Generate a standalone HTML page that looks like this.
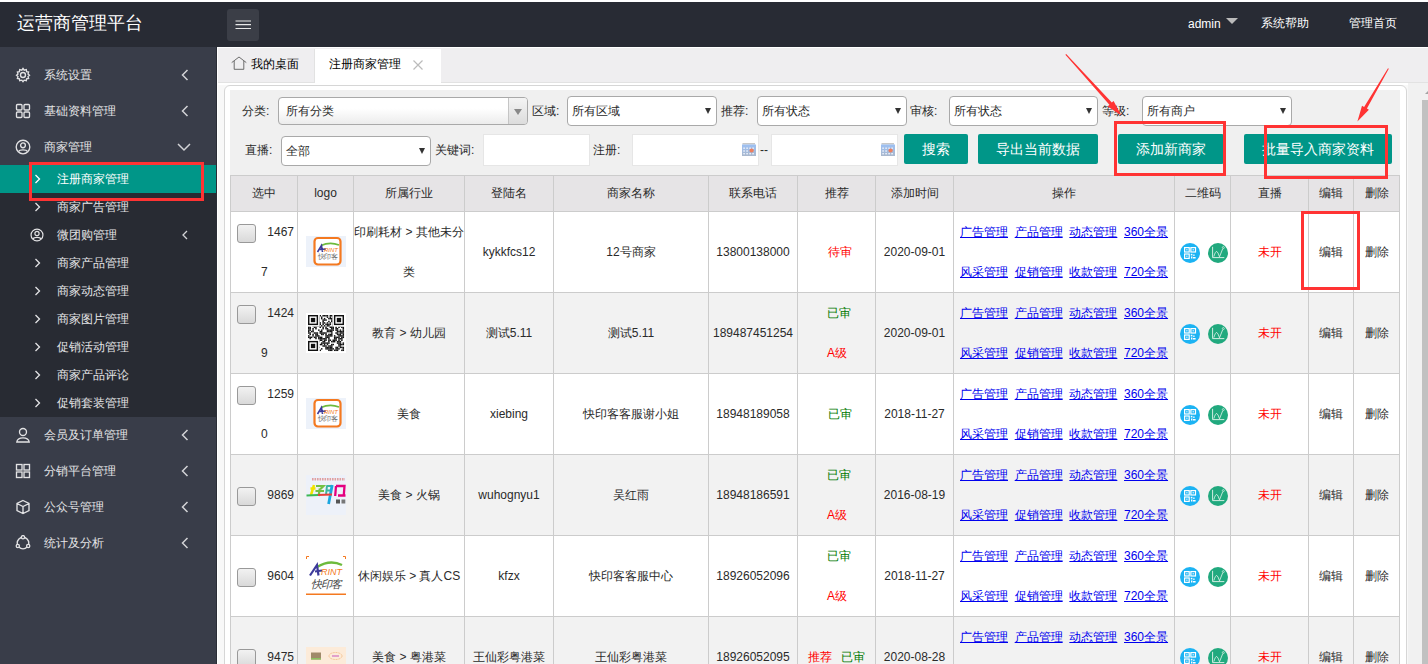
<!DOCTYPE html><html><head><meta charset="utf-8"><title>运营商管理平台</title><style>
*{margin:0;padding:0;box-sizing:border-box}
html,body{width:1428px;height:664px;overflow:hidden;background:#fff;font-family:"Liberation Sans",sans-serif;font-size:12px;color:#2a2a2a}
.abs{position:absolute}
.hdr{position:absolute;left:0;top:2px;width:1428px;height:45px;background:#282b34}
.side{position:absolute;left:0;top:47px;width:217px;height:617px;background:#393d49;border-right:1px solid #2a2d36}
.mi{position:absolute;left:44px;color:#e4e4e6;font-size:12px;line-height:16px;white-space:nowrap}
.sub{position:absolute;left:57px;color:#e4e4e6;font-size:12px;line-height:16px;white-space:nowrap}
.t{position:absolute;white-space:nowrap;line-height:16px}
.sel{position:absolute;background:#fff;border:1px solid #a9a9a9;border-radius:4px}
.sel span{position:absolute;left:6px;top:6px;font-size:12px;line-height:16px;color:#2a2a2a}
.arr{position:absolute;width:0;height:0;border-left:4px solid transparent;border-right:4px solid transparent;border-top:8px solid #333}
.inp{position:absolute;background:#fff;border:1px solid #e6e6e6}
.btn{position:absolute;background:#009688;color:#fff;font-size:14px;border-radius:2px;text-align:center;line-height:30px;height:30px}
.cell{position:absolute;text-align:center;font-size:12px;color:#2a2a2a}
.ln{position:absolute;left:0;width:100%;text-align:center;line-height:16px;white-space:nowrap}
a.lk{color:#0000ee;text-decoration:underline}
.red{color:#f00}.grn{color:#007a00}
.rb{position:absolute;border:3px solid #f33}
</style></head><body>
<div class="hdr"></div>
<div class="t" style="left:17px;top:13px;font-size:18px;line-height:20px;color:#fff">运营商管理平台</div>
<div class="abs" style="left:227px;top:9px;width:32px;height:32px;background:#3b3e47;border-radius:3px"></div>
<svg class="abs" style="left:227px;top:9px" width="32" height="32" viewBox="0 0 32 32"><path d="M8.5 12 H24 M8.5 15.7 H24 M8.5 19.5 H24" stroke="#e8e8e8" stroke-width="1.2"/></svg>
<div class="t" style="left:1188px;top:16px;color:#fff">admin</div>
<div class="arr" style="left:1226px;top:18px;border-left-width:6px;border-right-width:6px;border-top:6px solid #bbb"></div>
<div class="t" style="left:1261px;top:15px;color:#fff">系统帮助</div>
<div class="t" style="left:1349px;top:15px;color:#fff">管理首页</div>
<div class="side"></div>
<div class="abs" style="left:0;top:165px;width:216px;height:252px;background:#282b33"></div>
<div class="abs" style="left:0;top:165px;width:216px;height:28px;background:#009688"></div>
<svg class="abs" style="left:15px;top:67px" width="16" height="16" viewBox="0 0 16 16"><circle cx="8" cy="8" r="2.5" stroke="#e2e2e4" fill="none" stroke-width="1.35"/><path d="M8 1.5 L9.2 3.2 L11.3 2.6 L11.6 4.6 L13.6 5 L13 7 L14.5 8.3 L13 9.6 L13.6 11.4 L11.6 11.8 L11.3 13.6 L9.2 13.2 L8 14.7 L6.8 13.2 L4.7 13.6 L4.4 11.8 L2.4 11.4 L3 9.6 L1.5 8.3 L3 7 L2.4 5 L4.4 4.6 L4.7 2.6 L6.8 3.2 Z" stroke="#e2e2e4" fill="none" stroke-width="1.35"/></svg>
<div class="mi" style="top:67px">系统设置</div>
<svg class="abs" style="left:180px;top:69px" width="10" height="12" viewBox="0 0 10 12"><path d="M7.5 1 L2.5 6 L7.5 11" stroke="#d2d3d6" fill="none" stroke-width="1.5"/></svg>
<svg class="abs" style="left:15px;top:103px" width="16" height="16" viewBox="0 0 16 16"><rect x="1.5" y="1.5" width="5.5" height="5.5" rx="1" stroke="#e2e2e4" fill="none" stroke-width="1.35"/><rect x="9" y="1.5" width="5.5" height="5.5" rx="1" stroke="#e2e2e4" fill="none" stroke-width="1.35"/><rect x="1.5" y="9" width="5.5" height="5.5" rx="1" stroke="#e2e2e4" fill="none" stroke-width="1.35"/><rect x="9" y="9" width="5.5" height="5.5" rx="1" stroke="#e2e2e4" fill="none" stroke-width="1.35"/></svg>
<div class="mi" style="top:103px">基础资料管理</div>
<svg class="abs" style="left:180px;top:105px" width="10" height="12" viewBox="0 0 10 12"><path d="M7.5 1 L2.5 6 L7.5 11" stroke="#d2d3d6" fill="none" stroke-width="1.5"/></svg>
<svg class="abs" style="left:15px;top:139px" width="16" height="16" viewBox="0 0 16 16"><circle cx="8" cy="8" r="6.8" stroke="#e2e2e4" fill="none" stroke-width="1.35"/><circle cx="8" cy="6.3" r="2.4" stroke="#e2e2e4" fill="none" stroke-width="1.35"/><path d="M3.6 12.6 C4.5 10.2 11.5 10.2 12.4 12.6" stroke="#e2e2e4" fill="none" stroke-width="1.35"/></svg>
<div class="mi" style="top:139px">商家管理</div>
<svg class="abs" style="left:177px;top:142px" width="14" height="10" viewBox="0 0 14 10"><path d="M1 2 L7 8 L13 2" stroke="#d2d3d6" fill="none" stroke-width="1.5"/></svg>
<svg class="abs" style="left:34px;top:173px" width="8" height="12" viewBox="0 0 8 12"><path d="M1.5 2 L5.5 6 L1.5 10" stroke="#fff" fill="none" stroke-width="1.3"/></svg>
<div class="sub" style="top:171px;color:#fff">注册商家管理</div>
<svg class="abs" style="left:34px;top:201px" width="8" height="12" viewBox="0 0 8 12"><path d="M1.5 2 L5.5 6 L1.5 10" stroke="#e4e4e6" fill="none" stroke-width="1.3"/></svg>
<div class="sub" style="top:199px;color:#e4e4e6">商家广告管理</div>
<svg class="abs" style="left:30px;top:228px" width="14" height="14" viewBox="0 0 16 16"><circle cx="8" cy="8" r="6.8" stroke="#e2e2e4" fill="none" stroke-width="1.35"/><circle cx="8" cy="6.3" r="2.4" stroke="#e2e2e4" fill="none" stroke-width="1.35"/><path d="M3.6 12.6 C4.5 10.2 11.5 10.2 12.4 12.6" stroke="#e2e2e4" fill="none" stroke-width="1.35"/></svg>
<div class="sub" style="top:227px;color:#e4e4e6">微团购管理</div>
<svg class="abs" style="left:181px;top:229px" width="8" height="12" viewBox="0 0 8 12"><path d="M6 2 L2 6 L6 10" stroke="#d2d3d6" fill="none" stroke-width="1.3"/></svg>
<svg class="abs" style="left:34px;top:257px" width="8" height="12" viewBox="0 0 8 12"><path d="M1.5 2 L5.5 6 L1.5 10" stroke="#e4e4e6" fill="none" stroke-width="1.3"/></svg>
<div class="sub" style="top:255px;color:#e4e4e6">商家产品管理</div>
<svg class="abs" style="left:34px;top:285px" width="8" height="12" viewBox="0 0 8 12"><path d="M1.5 2 L5.5 6 L1.5 10" stroke="#e4e4e6" fill="none" stroke-width="1.3"/></svg>
<div class="sub" style="top:283px;color:#e4e4e6">商家动态管理</div>
<svg class="abs" style="left:34px;top:313px" width="8" height="12" viewBox="0 0 8 12"><path d="M1.5 2 L5.5 6 L1.5 10" stroke="#e4e4e6" fill="none" stroke-width="1.3"/></svg>
<div class="sub" style="top:311px;color:#e4e4e6">商家图片管理</div>
<svg class="abs" style="left:34px;top:341px" width="8" height="12" viewBox="0 0 8 12"><path d="M1.5 2 L5.5 6 L1.5 10" stroke="#e4e4e6" fill="none" stroke-width="1.3"/></svg>
<div class="sub" style="top:339px;color:#e4e4e6">促销活动管理</div>
<svg class="abs" style="left:34px;top:369px" width="8" height="12" viewBox="0 0 8 12"><path d="M1.5 2 L5.5 6 L1.5 10" stroke="#e4e4e6" fill="none" stroke-width="1.3"/></svg>
<div class="sub" style="top:367px;color:#e4e4e6">商家产品评论</div>
<svg class="abs" style="left:34px;top:397px" width="8" height="12" viewBox="0 0 8 12"><path d="M1.5 2 L5.5 6 L1.5 10" stroke="#e4e4e6" fill="none" stroke-width="1.3"/></svg>
<div class="sub" style="top:395px;color:#e4e4e6">促销套装管理</div>
<svg class="abs" style="left:15px;top:427px" width="16" height="16" viewBox="0 0 16 16"><circle cx="8" cy="5" r="3.5" stroke="#e2e2e4" fill="none" stroke-width="1.35"/><path d="M1.8 15 C2.5 9.5 13.5 9.5 14.2 15 Z" stroke="#e2e2e4" fill="none" stroke-width="1.35"/></svg>
<div class="mi" style="top:427px">会员及订单管理</div>
<svg class="abs" style="left:180px;top:429px" width="10" height="12" viewBox="0 0 10 12"><path d="M7.5 1 L2.5 6 L7.5 11" stroke="#d2d3d6" fill="none" stroke-width="1.5"/></svg>
<svg class="abs" style="left:15px;top:463px" width="16" height="16" viewBox="0 0 16 16"><rect x="1.5" y="1.5" width="5.5" height="5.5" stroke="#e2e2e4" fill="none" stroke-width="1.35"/><rect x="9" y="1.5" width="5.5" height="5.5" stroke="#e2e2e4" fill="none" stroke-width="1.35"/><rect x="1.5" y="9" width="5.5" height="5.5" stroke="#e2e2e4" fill="none" stroke-width="1.35"/><rect x="9" y="9" width="5.5" height="5.5" stroke="#e2e2e4" fill="none" stroke-width="1.35"/></svg>
<div class="mi" style="top:463px">分销平台管理</div>
<svg class="abs" style="left:180px;top:465px" width="10" height="12" viewBox="0 0 10 12"><path d="M7.5 1 L2.5 6 L7.5 11" stroke="#d2d3d6" fill="none" stroke-width="1.5"/></svg>
<svg class="abs" style="left:15px;top:499px" width="16" height="16" viewBox="0 0 16 16"><path d="M8 1.5 L14 4.5 L14 11.5 L8 14.5 L2 11.5 L2 4.5 Z M2 4.5 L8 7.5 L14 4.5 M8 7.5 L8 14.5" stroke="#e2e2e4" fill="none" stroke-width="1.35"/></svg>
<div class="mi" style="top:499px">公众号管理</div>
<svg class="abs" style="left:180px;top:501px" width="10" height="12" viewBox="0 0 10 12"><path d="M7.5 1 L2.5 6 L7.5 11" stroke="#d2d3d6" fill="none" stroke-width="1.5"/></svg>
<svg class="abs" style="left:15px;top:535px" width="16" height="16" viewBox="0 0 16 16"><circle cx="8" cy="8" r="5.8" stroke="#e2e2e4" fill="none" stroke-width="1.35"/><circle cx="8" cy="2.2" r="1.6" fill="#393d49" stroke="#e2e2e4" fill="none" stroke-width="1.35"/><circle cx="2.8" cy="11" r="1.6" fill="#393d49" stroke="#e2e2e4" fill="none" stroke-width="1.35"/><circle cx="13.2" cy="11" r="1.6" fill="#393d49" stroke="#e2e2e4" fill="none" stroke-width="1.35"/></svg>
<div class="mi" style="top:535px">统计及分析</div>
<svg class="abs" style="left:180px;top:537px" width="10" height="12" viewBox="0 0 10 12"><path d="M7.5 1 L2.5 6 L7.5 11" stroke="#d2d3d6" fill="none" stroke-width="1.5"/></svg>
<div class="rb" style="left:29px;top:162px;width:175px;height:39px"></div>
<div class="abs" style="left:217px;top:47px;width:1211px;height:36px;background:#efeef0;border-top:1px solid #fff;border-bottom:1px solid #e2e2e2"></div>
<div class="abs" style="left:217px;top:47px;width:1px;height:617px;background:#fff"></div>
<svg class="abs" style="left:231px;top:56px" width="16" height="15" viewBox="0 0 16 15"><path d="M0.7 6.6 L8 1 L15.3 6.6 M3.2 5 V13.3 H12.8 V5" stroke="#555" fill="none" stroke-width="0.85"/></svg>
<div class="t" style="left:251px;top:56px;color:#000">我的桌面</div>
<div class="abs" style="left:314px;top:49px;width:127px;height:34px;background:#fff;border-left:1px solid #e2e2e2"></div>
<div class="t" style="left:329px;top:56px;color:#000">注册商家管理</div>
<svg class="abs" style="left:413px;top:60px" width="10" height="10" viewBox="0 0 10 10"><path d="M0.5 0.5 L9.5 9.5 M9.5 0.5 L0.5 9.5" stroke="#bbb" fill="none" stroke-width="1.2"/></svg>
<div class="abs" style="left:218px;top:83px;width:1190px;height:581px;background:#f8f8f8"></div><div class="abs" style="left:218px;top:83px;width:1190px;height:2px;background:#fff"></div>
<div class="abs" style="left:1408px;top:83px;width:20px;height:581px;background:#f1f1f1"></div>
<div class="abs" style="left:1422px;top:100px;width:6px;height:564px;background:#c1c1c1"></div>
<div class="abs" style="left:1425px;top:90px;width:0;height:0;border-left:4px solid transparent;border-right:4px solid transparent;border-bottom:4px solid #a3a3a3"></div>
<div class="abs" style="left:224px;top:85px;width:1183px;height:600px;border:1px solid #d6d6d6;border-radius:6px;background:#fff"></div>
<div class="abs" style="left:230px;top:90px;width:1170px;height:600px;background:#f0f0f0"></div>
<div class="t" style="left:242px;top:103px">分类:</div>
<div class="sel" style="left:278px;top:97px;width:250px;height:28px;background:linear-gradient(#fff 40%,#ececec)"><span style="left:7px;top:5px">所有分类</span></div>
<div class="abs" style="left:508px;top:98px;width:19px;height:26px;border-left:1px solid #c5c5c5;background:linear-gradient(#f4f4f4,#dcdcdc);border-radius:0 3px 3px 0"></div>
<div class="arr" style="left:514px;top:109px;border-left-width:4px;border-right-width:4px;border-top:6px solid #888"></div>
<div class="t" style="left:532px;top:103px">区域:</div>
<div class="sel" style="left:567px;top:96px;width:150px;height:30px;"><span style="left:4px;top:6px">所有区域</span></div>
<div class="arr" style="left:705px;top:108px;border-left-width:3px;border-right-width:3px;border-top:6px solid #333"></div>
<div class="t" style="left:721px;top:103px">推荐:</div>
<div class="sel" style="left:757px;top:96px;width:150px;height:30px;"><span style="left:4px;top:6px">所有状态</span></div>
<div class="arr" style="left:895px;top:108px;border-left-width:3px;border-right-width:3px;border-top:6px solid #333"></div>
<div class="t" style="left:910px;top:103px">审核:</div>
<div class="sel" style="left:949px;top:96px;width:149px;height:30px;"><span style="left:4px;top:6px">所有状态</span></div>
<div class="arr" style="left:1086px;top:108px;border-left-width:3px;border-right-width:3px;border-top:6px solid #333"></div>
<div class="t" style="left:1102px;top:103px">等级:</div>
<div class="sel" style="left:1142px;top:96px;width:150px;height:30px;"><span style="left:4px;top:6px">所有商户</span></div>
<div class="arr" style="left:1280px;top:108px;border-left-width:3px;border-right-width:3px;border-top:6px solid #333"></div>
<div class="t" style="left:245px;top:142px">直播:</div>
<div class="sel" style="left:281px;top:136px;width:150px;height:30px;"><span style="left:4px;top:6px">全部</span></div>
<div class="arr" style="left:419px;top:148px;border-left-width:3px;border-right-width:3px;border-top:6px solid #333"></div>
<div class="t" style="left:435px;top:142px">关键词:</div>
<div class="inp" style="left:483px;top:134px;width:107px;height:32px"></div>
<div class="t" style="left:593px;top:142px">注册:</div>
<div class="inp" style="left:632px;top:134px;width:127px;height:32px"></div>
<svg class="abs" style="left:742px;top:143px" width="14" height="13" viewBox="0 0 14 13"><defs><linearGradient id="cg" x1="0" y1="0" x2="0" y2="1"><stop offset="0" stop-color="#9cc0f4"/><stop offset="1" stop-color="#aab8cc"/></linearGradient></defs><rect x="0.5" y="0" width="12.5" height="1.6" fill="#c8c8c8"/><rect x="0" y="1.5" width="14" height="11.5" fill="url(#cg)"/><g fill="#f4f8ff" opacity="0.9"><rect x="1.3" y="4.5" width="1.6" height="1.4"/><rect x="4.3" y="4.5" width="1.6" height="1.4"/><rect x="7.3" y="4.5" width="1.6" height="1.4"/><rect x="10.3" y="4.5" width="1.6" height="1.4"/><rect x="1.3" y="7.3" width="1.6" height="1.4"/><rect x="4.3" y="7.3" width="1.6" height="1.4"/><rect x="1.3" y="10" width="1.6" height="1.4"/><rect x="4.3" y="10" width="1.6" height="1.4"/><rect x="7.3" y="10" width="1.6" height="1.4"/><rect x="10.3" y="10" width="1.6" height="1.4"/></g><circle cx="9.6" cy="7.5" r="2.1" fill="#ee7f5e"/></svg>
<div class="t" style="left:760px;top:142px">--</div>
<div class="inp" style="left:771px;top:134px;width:127px;height:32px"></div>
<svg class="abs" style="left:881px;top:143px" width="14" height="13" viewBox="0 0 14 13"><defs><linearGradient id="cg" x1="0" y1="0" x2="0" y2="1"><stop offset="0" stop-color="#9cc0f4"/><stop offset="1" stop-color="#aab8cc"/></linearGradient></defs><rect x="0.5" y="0" width="12.5" height="1.6" fill="#c8c8c8"/><rect x="0" y="1.5" width="14" height="11.5" fill="url(#cg)"/><g fill="#f4f8ff" opacity="0.9"><rect x="1.3" y="4.5" width="1.6" height="1.4"/><rect x="4.3" y="4.5" width="1.6" height="1.4"/><rect x="7.3" y="4.5" width="1.6" height="1.4"/><rect x="10.3" y="4.5" width="1.6" height="1.4"/><rect x="1.3" y="7.3" width="1.6" height="1.4"/><rect x="4.3" y="7.3" width="1.6" height="1.4"/><rect x="1.3" y="10" width="1.6" height="1.4"/><rect x="4.3" y="10" width="1.6" height="1.4"/><rect x="7.3" y="10" width="1.6" height="1.4"/><rect x="10.3" y="10" width="1.6" height="1.4"/></g><circle cx="9.6" cy="7.5" r="2.1" fill="#ee7f5e"/></svg>
<div class="btn" style="left:904px;top:134px;width:64px">搜索</div>
<div class="btn" style="left:978px;top:134px;width:120px">导出当前数据</div>
<div class="btn" style="left:1118px;top:134px;width:106px">添加新商家</div>
<div class="btn" style="left:1244px;top:134px;width:148px">批量导入商家资料</div>
<div class="abs" style="left:230px;top:175px;width:1170px;height:36px;background:#e6e4e6"></div>
<div class="abs" style="left:230px;top:211px;width:1170px;height:81px;background:#fff"></div>
<div class="abs" style="left:230px;top:292px;width:1170px;height:81px;background:#f2f2f2"></div>
<div class="abs" style="left:230px;top:373px;width:1170px;height:81px;background:#fff"></div>
<div class="abs" style="left:230px;top:454px;width:1170px;height:81px;background:#f2f2f2"></div>
<div class="abs" style="left:230px;top:535px;width:1170px;height:81px;background:#fff"></div>
<div class="abs" style="left:230px;top:616px;width:1170px;height:81px;background:#f2f2f2"></div>
<div class="abs" style="left:230px;top:175px;width:1px;height:489px;background:#ccc"></div>
<div class="abs" style="left:297px;top:175px;width:1px;height:489px;background:#ccc"></div>
<div class="abs" style="left:353px;top:175px;width:1px;height:489px;background:#ccc"></div>
<div class="abs" style="left:464px;top:175px;width:1px;height:489px;background:#ccc"></div>
<div class="abs" style="left:553px;top:175px;width:1px;height:489px;background:#ccc"></div>
<div class="abs" style="left:708px;top:175px;width:1px;height:489px;background:#ccc"></div>
<div class="abs" style="left:797px;top:175px;width:1px;height:489px;background:#ccc"></div>
<div class="abs" style="left:875px;top:175px;width:1px;height:489px;background:#ccc"></div>
<div class="abs" style="left:953px;top:175px;width:1px;height:489px;background:#ccc"></div>
<div class="abs" style="left:1174px;top:175px;width:1px;height:489px;background:#ccc"></div>
<div class="abs" style="left:1230px;top:175px;width:1px;height:489px;background:#ccc"></div>
<div class="abs" style="left:1308px;top:175px;width:1px;height:489px;background:#ccc"></div>
<div class="abs" style="left:1353px;top:175px;width:1px;height:489px;background:#ccc"></div>
<div class="abs" style="left:1399px;top:175px;width:1px;height:489px;background:#ccc"></div>
<div class="abs" style="left:230px;top:175px;width:1170px;height:1px;background:#ccc"></div>
<div class="abs" style="left:230px;top:211px;width:1170px;height:1px;background:#ccc"></div>
<div class="abs" style="left:230px;top:292px;width:1170px;height:1px;background:#ccc"></div>
<div class="abs" style="left:230px;top:373px;width:1170px;height:1px;background:#ccc"></div>
<div class="abs" style="left:230px;top:454px;width:1170px;height:1px;background:#ccc"></div>
<div class="abs" style="left:230px;top:535px;width:1170px;height:1px;background:#ccc"></div>
<div class="abs" style="left:230px;top:616px;width:1170px;height:1px;background:#ccc"></div>
<div class="cell" style="left:230px;width:68px;top:185px;line-height:16px">选中</div>
<div class="cell" style="left:297px;width:57px;top:185px;line-height:16px">logo</div>
<div class="cell" style="left:353px;width:112px;top:185px;line-height:16px">所属行业</div>
<div class="cell" style="left:464px;width:90px;top:185px;line-height:16px">登陆名</div>
<div class="cell" style="left:553px;width:156px;top:185px;line-height:16px">商家名称</div>
<div class="cell" style="left:708px;width:90px;top:185px;line-height:16px">联系电话</div>
<div class="cell" style="left:797px;width:79px;top:185px;line-height:16px">推荐</div>
<div class="cell" style="left:875px;width:79px;top:185px;line-height:16px">添加时间</div>
<div class="cell" style="left:953px;width:222px;top:185px;line-height:16px">操作</div>
<div class="cell" style="left:1174px;width:57px;top:185px;line-height:16px">二维码</div>
<div class="cell" style="left:1230px;width:79px;top:185px;line-height:16px">直播</div>
<div class="cell" style="left:1308px;width:46px;top:185px;line-height:16px">编辑</div>
<div class="cell" style="left:1353px;width:47px;top:185px;line-height:16px">删除</div>
<div class="cell " style="left:230px;width:68px;top:224px;line-height:16px;text-align:right;white-space:nowrap;padding-right:4px">1467</div>
<div class="cell " style="left:230px;width:68px;top:264px;line-height:16px;text-align:left;white-space:nowrap;padding-left:31px">7</div>
<div class="abs" style="left:237px;top:224px;width:19px;height:19px;border:1px solid #999;border-radius:3px;background:linear-gradient(#f2f2f2,#d9d9d9)"></div>
<svg class="abs" style="left:306px;top:236px" width="40" height="31" viewBox="0 0 40 31"><rect width="40" height="31" fill="#edf2fa"/><rect x="8.5" y="2" width="26" height="26.5" rx="3.5" fill="#fff" stroke="#f47920" stroke-width="2.2"/><path d="M15 9.5 Q24 5.5 33 9" stroke="#6dbb3c" stroke-width="1.6" fill="none"/><path d="M11.5 16 L15.5 9.5 L16.5 16 M14 13.5 L20 13" stroke="#3d3a9a" stroke-width="1.6" fill="none"/><text x="18" y="15.5" font-size="6" fill="#f47920" font-family="Liberation Sans" font-style="italic">RINT</text><text x="11.5" y="23" font-size="7" fill="#6a6a6a" font-family="Liberation Sans" letter-spacing="-0.5">快印客</text></svg>
<div class="cell " style="left:353px;width:112px;top:224px;line-height:16px;text-align:center;white-space:nowrap;">印刷耗材 > 其他未分</div>
<div class="cell " style="left:353px;width:112px;top:264px;line-height:16px;text-align:center;white-space:nowrap;">类</div>
<div class="cell " style="left:464px;width:90px;top:244px;line-height:16px;text-align:center;white-space:nowrap;">kykkfcs12</div>
<div class="cell " style="left:553px;width:156px;top:244px;line-height:16px;text-align:center;white-space:nowrap;">12号商家</div>
<div class="cell " style="left:708px;width:90px;top:244px;line-height:16px;text-align:center;white-space:nowrap;">13800138000</div>
<div class="cell red" style="left:797px;width:79px;top:244px;line-height:16px;text-align:left;white-space:nowrap;padding-left:31px">待审</div>
<div class="cell " style="left:875px;width:79px;top:244px;line-height:16px;text-align:center;white-space:nowrap;">2020-09-01</div>
<div class="cell" style="left:960px;top:224px;line-height:16px;white-space:nowrap;text-align:left"><a class="lk">广告管理</a> &nbsp;<a class="lk">产品管理</a> &nbsp;<a class="lk">动态管理</a> &nbsp;<a class="lk">360全景</a></div>
<div class="cell" style="left:960px;top:264px;line-height:16px;white-space:nowrap;text-align:left"><a class="lk">风采管理</a> &nbsp;<a class="lk">促销管理</a> &nbsp;<a class="lk">收款管理</a> &nbsp;<a class="lk">720全景</a></div>
<svg class="abs" style="left:1180px;top:243px" width="20" height="20" viewBox="0 0 20 20"><circle cx="10" cy="10" r="10" fill="#1cb3f3"/><g fill="none" stroke="#fff" stroke-width="1.2"><rect x="4.6" y="4.6" width="4.6" height="4.4"/><rect x="10.9" y="4.6" width="4.6" height="4.4"/><rect x="4.6" y="11" width="4.6" height="4.4"/></g><g fill="#fff"><rect x="6.3" y="6.2" width="1.2" height="1.2"/><rect x="12.6" y="6.2" width="1.2" height="1.2"/><rect x="6.3" y="12.6" width="1.2" height="1.2"/><rect x="10.8" y="10.8" width="1.6" height="1.6"/><rect x="13.2" y="11.5" width="1.4" height="1.4"/><rect x="11" y="13.5" width="1.4" height="2"/><rect x="13" y="14" width="2.6" height="1.5"/></g></svg>
<svg class="abs" style="left:1208px;top:243px" width="20" height="20" viewBox="0 0 20 20"><circle cx="10" cy="10" r="10" fill="#21a97e"/><path d="M4.6 3.8 V14.6 H16.3" stroke="#e6f5ee" stroke-width="0.9" fill="none"/><path d="M5.8 13.6 Q7.5 8 8.8 8.5 Q10 9 11.5 13.8 L14.6 6" stroke="#e6f5ee" stroke-width="0.8" fill="none"/><circle cx="15.3" cy="4.6" r="1" stroke="#e6f5ee" stroke-width="0.7" fill="none"/></svg>
<div class="cell red" style="left:1230px;width:79px;top:244px;line-height:16px;text-align:center;white-space:nowrap;">未开</div>
<div class="cell " style="left:1308px;width:46px;top:244px;line-height:16px;text-align:center;white-space:nowrap;">编辑</div>
<div class="cell " style="left:1353px;width:47px;top:244px;line-height:16px;text-align:center;white-space:nowrap;">删除</div>
<div class="cell " style="left:230px;width:68px;top:305px;line-height:16px;text-align:right;white-space:nowrap;padding-right:4px">1424</div>
<div class="cell " style="left:230px;width:68px;top:345px;line-height:16px;text-align:left;white-space:nowrap;padding-left:31px">9</div>
<div class="abs" style="left:237px;top:305px;width:19px;height:19px;border:1px solid #999;border-radius:3px;background:linear-gradient(#f2f2f2,#d9d9d9)"></div>
<svg class="abs" style="left:306px;top:313px" width="40" height="40" viewBox="0 0 40 40"><rect width="40" height="40" fill="#fff"/><rect x="2.00" y="2.00" width="1.49" height="1.49" fill="#111"/><rect x="2.00" y="3.44" width="1.49" height="1.49" fill="#111"/><rect x="2.00" y="6.32" width="1.49" height="1.49" fill="#111"/><rect x="2.00" y="9.20" width="1.49" height="1.49" fill="#111"/><rect x="2.00" y="10.64" width="1.49" height="1.49" fill="#111"/><rect x="2.00" y="12.08" width="1.49" height="1.49" fill="#111"/><rect x="2.00" y="13.52" width="1.49" height="1.49" fill="#111"/><rect x="2.00" y="14.96" width="1.49" height="1.49" fill="#111"/><rect x="2.00" y="16.40" width="1.49" height="1.49" fill="#111"/><rect x="2.00" y="17.84" width="1.49" height="1.49" fill="#111"/><rect x="2.00" y="19.28" width="1.49" height="1.49" fill="#111"/><rect x="2.00" y="22.16" width="1.49" height="1.49" fill="#111"/><rect x="2.00" y="23.60" width="1.49" height="1.49" fill="#111"/><rect x="2.00" y="29.36" width="1.49" height="1.49" fill="#111"/><rect x="2.00" y="32.24" width="1.49" height="1.49" fill="#111"/><rect x="2.00" y="35.12" width="1.49" height="1.49" fill="#111"/><rect x="2.00" y="36.56" width="1.49" height="1.49" fill="#111"/><rect x="3.44" y="2.00" width="1.49" height="1.49" fill="#111"/><rect x="3.44" y="3.44" width="1.49" height="1.49" fill="#111"/><rect x="3.44" y="6.32" width="1.49" height="1.49" fill="#111"/><rect x="3.44" y="10.64" width="1.49" height="1.49" fill="#111"/><rect x="3.44" y="13.52" width="1.49" height="1.49" fill="#111"/><rect x="3.44" y="14.96" width="1.49" height="1.49" fill="#111"/><rect x="3.44" y="16.40" width="1.49" height="1.49" fill="#111"/><rect x="3.44" y="19.28" width="1.49" height="1.49" fill="#111"/><rect x="3.44" y="20.72" width="1.49" height="1.49" fill="#111"/><rect x="3.44" y="23.60" width="1.49" height="1.49" fill="#111"/><rect x="3.44" y="25.04" width="1.49" height="1.49" fill="#111"/><rect x="3.44" y="29.36" width="1.49" height="1.49" fill="#111"/><rect x="3.44" y="36.56" width="1.49" height="1.49" fill="#111"/><rect x="4.88" y="3.44" width="1.49" height="1.49" fill="#111"/><rect x="4.88" y="4.88" width="1.49" height="1.49" fill="#111"/><rect x="4.88" y="7.76" width="1.49" height="1.49" fill="#111"/><rect x="4.88" y="9.20" width="1.49" height="1.49" fill="#111"/><rect x="4.88" y="10.64" width="1.49" height="1.49" fill="#111"/><rect x="4.88" y="17.84" width="1.49" height="1.49" fill="#111"/><rect x="4.88" y="23.60" width="1.49" height="1.49" fill="#111"/><rect x="4.88" y="27.92" width="1.49" height="1.49" fill="#111"/><rect x="4.88" y="30.80" width="1.49" height="1.49" fill="#111"/><rect x="6.32" y="2.00" width="1.49" height="1.49" fill="#111"/><rect x="6.32" y="3.44" width="1.49" height="1.49" fill="#111"/><rect x="6.32" y="6.32" width="1.49" height="1.49" fill="#111"/><rect x="6.32" y="7.76" width="1.49" height="1.49" fill="#111"/><rect x="6.32" y="9.20" width="1.49" height="1.49" fill="#111"/><rect x="6.32" y="10.64" width="1.49" height="1.49" fill="#111"/><rect x="6.32" y="12.08" width="1.49" height="1.49" fill="#111"/><rect x="6.32" y="14.96" width="1.49" height="1.49" fill="#111"/><rect x="6.32" y="16.40" width="1.49" height="1.49" fill="#111"/><rect x="6.32" y="17.84" width="1.49" height="1.49" fill="#111"/><rect x="6.32" y="20.72" width="1.49" height="1.49" fill="#111"/><rect x="6.32" y="22.16" width="1.49" height="1.49" fill="#111"/><rect x="6.32" y="29.36" width="1.49" height="1.49" fill="#111"/><rect x="6.32" y="30.80" width="1.49" height="1.49" fill="#111"/><rect x="6.32" y="32.24" width="1.49" height="1.49" fill="#111"/><rect x="6.32" y="36.56" width="1.49" height="1.49" fill="#111"/><rect x="7.76" y="2.00" width="1.49" height="1.49" fill="#111"/><rect x="7.76" y="3.44" width="1.49" height="1.49" fill="#111"/><rect x="7.76" y="4.88" width="1.49" height="1.49" fill="#111"/><rect x="7.76" y="6.32" width="1.49" height="1.49" fill="#111"/><rect x="7.76" y="9.20" width="1.49" height="1.49" fill="#111"/><rect x="7.76" y="10.64" width="1.49" height="1.49" fill="#111"/><rect x="7.76" y="12.08" width="1.49" height="1.49" fill="#111"/><rect x="7.76" y="13.52" width="1.49" height="1.49" fill="#111"/><rect x="7.76" y="19.28" width="1.49" height="1.49" fill="#111"/><rect x="7.76" y="23.60" width="1.49" height="1.49" fill="#111"/><rect x="7.76" y="30.80" width="1.49" height="1.49" fill="#111"/><rect x="7.76" y="32.24" width="1.49" height="1.49" fill="#111"/><rect x="7.76" y="33.68" width="1.49" height="1.49" fill="#111"/><rect x="7.76" y="36.56" width="1.49" height="1.49" fill="#111"/><rect x="9.20" y="2.00" width="1.49" height="1.49" fill="#111"/><rect x="9.20" y="3.44" width="1.49" height="1.49" fill="#111"/><rect x="9.20" y="4.88" width="1.49" height="1.49" fill="#111"/><rect x="9.20" y="6.32" width="1.49" height="1.49" fill="#111"/><rect x="9.20" y="7.76" width="1.49" height="1.49" fill="#111"/><rect x="9.20" y="9.20" width="1.49" height="1.49" fill="#111"/><rect x="9.20" y="10.64" width="1.49" height="1.49" fill="#111"/><rect x="9.20" y="12.08" width="1.49" height="1.49" fill="#111"/><rect x="9.20" y="13.52" width="1.49" height="1.49" fill="#111"/><rect x="9.20" y="14.96" width="1.49" height="1.49" fill="#111"/><rect x="9.20" y="19.28" width="1.49" height="1.49" fill="#111"/><rect x="9.20" y="20.72" width="1.49" height="1.49" fill="#111"/><rect x="9.20" y="22.16" width="1.49" height="1.49" fill="#111"/><rect x="9.20" y="23.60" width="1.49" height="1.49" fill="#111"/><rect x="9.20" y="25.04" width="1.49" height="1.49" fill="#111"/><rect x="9.20" y="29.36" width="1.49" height="1.49" fill="#111"/><rect x="9.20" y="30.80" width="1.49" height="1.49" fill="#111"/><rect x="9.20" y="32.24" width="1.49" height="1.49" fill="#111"/><rect x="9.20" y="33.68" width="1.49" height="1.49" fill="#111"/><rect x="9.20" y="35.12" width="1.49" height="1.49" fill="#111"/><rect x="9.20" y="36.56" width="1.49" height="1.49" fill="#111"/><rect x="10.64" y="3.44" width="1.49" height="1.49" fill="#111"/><rect x="10.64" y="4.88" width="1.49" height="1.49" fill="#111"/><rect x="10.64" y="9.20" width="1.49" height="1.49" fill="#111"/><rect x="10.64" y="12.08" width="1.49" height="1.49" fill="#111"/><rect x="10.64" y="19.28" width="1.49" height="1.49" fill="#111"/><rect x="10.64" y="20.72" width="1.49" height="1.49" fill="#111"/><rect x="10.64" y="22.16" width="1.49" height="1.49" fill="#111"/><rect x="10.64" y="27.92" width="1.49" height="1.49" fill="#111"/><rect x="10.64" y="29.36" width="1.49" height="1.49" fill="#111"/><rect x="12.08" y="3.44" width="1.49" height="1.49" fill="#111"/><rect x="12.08" y="4.88" width="1.49" height="1.49" fill="#111"/><rect x="12.08" y="6.32" width="1.49" height="1.49" fill="#111"/><rect x="12.08" y="7.76" width="1.49" height="1.49" fill="#111"/><rect x="12.08" y="9.20" width="1.49" height="1.49" fill="#111"/><rect x="12.08" y="10.64" width="1.49" height="1.49" fill="#111"/><rect x="12.08" y="12.08" width="1.49" height="1.49" fill="#111"/><rect x="12.08" y="16.40" width="1.49" height="1.49" fill="#111"/><rect x="12.08" y="22.16" width="1.49" height="1.49" fill="#111"/><rect x="12.08" y="23.60" width="1.49" height="1.49" fill="#111"/><rect x="12.08" y="25.04" width="1.49" height="1.49" fill="#111"/><rect x="12.08" y="26.48" width="1.49" height="1.49" fill="#111"/><rect x="12.08" y="27.92" width="1.49" height="1.49" fill="#111"/><rect x="12.08" y="33.68" width="1.49" height="1.49" fill="#111"/><rect x="13.52" y="2.00" width="1.49" height="1.49" fill="#111"/><rect x="13.52" y="9.20" width="1.49" height="1.49" fill="#111"/><rect x="13.52" y="10.64" width="1.49" height="1.49" fill="#111"/><rect x="13.52" y="13.52" width="1.49" height="1.49" fill="#111"/><rect x="13.52" y="17.84" width="1.49" height="1.49" fill="#111"/><rect x="13.52" y="19.28" width="1.49" height="1.49" fill="#111"/><rect x="13.52" y="23.60" width="1.49" height="1.49" fill="#111"/><rect x="13.52" y="25.04" width="1.49" height="1.49" fill="#111"/><rect x="13.52" y="26.48" width="1.49" height="1.49" fill="#111"/><rect x="13.52" y="30.80" width="1.49" height="1.49" fill="#111"/><rect x="13.52" y="36.56" width="1.49" height="1.49" fill="#111"/><rect x="14.96" y="3.44" width="1.49" height="1.49" fill="#111"/><rect x="14.96" y="4.88" width="1.49" height="1.49" fill="#111"/><rect x="14.96" y="12.08" width="1.49" height="1.49" fill="#111"/><rect x="14.96" y="16.40" width="1.49" height="1.49" fill="#111"/><rect x="14.96" y="17.84" width="1.49" height="1.49" fill="#111"/><rect x="14.96" y="19.28" width="1.49" height="1.49" fill="#111"/><rect x="14.96" y="20.72" width="1.49" height="1.49" fill="#111"/><rect x="14.96" y="23.60" width="1.49" height="1.49" fill="#111"/><rect x="14.96" y="25.04" width="1.49" height="1.49" fill="#111"/><rect x="14.96" y="26.48" width="1.49" height="1.49" fill="#111"/><rect x="14.96" y="29.36" width="1.49" height="1.49" fill="#111"/><rect x="14.96" y="30.80" width="1.49" height="1.49" fill="#111"/><rect x="14.96" y="35.12" width="1.49" height="1.49" fill="#111"/><rect x="16.40" y="2.00" width="1.49" height="1.49" fill="#111"/><rect x="16.40" y="6.32" width="1.49" height="1.49" fill="#111"/><rect x="16.40" y="7.76" width="1.49" height="1.49" fill="#111"/><rect x="16.40" y="9.20" width="1.49" height="1.49" fill="#111"/><rect x="16.40" y="10.64" width="1.49" height="1.49" fill="#111"/><rect x="16.40" y="13.52" width="1.49" height="1.49" fill="#111"/><rect x="16.40" y="14.96" width="1.49" height="1.49" fill="#111"/><rect x="16.40" y="19.28" width="1.49" height="1.49" fill="#111"/><rect x="16.40" y="20.72" width="1.49" height="1.49" fill="#111"/><rect x="16.40" y="25.04" width="1.49" height="1.49" fill="#111"/><rect x="16.40" y="27.92" width="1.49" height="1.49" fill="#111"/><rect x="16.40" y="29.36" width="1.49" height="1.49" fill="#111"/><rect x="16.40" y="32.24" width="1.49" height="1.49" fill="#111"/><rect x="17.84" y="2.00" width="1.49" height="1.49" fill="#111"/><rect x="17.84" y="4.88" width="1.49" height="1.49" fill="#111"/><rect x="17.84" y="6.32" width="1.49" height="1.49" fill="#111"/><rect x="17.84" y="9.20" width="1.49" height="1.49" fill="#111"/><rect x="17.84" y="12.08" width="1.49" height="1.49" fill="#111"/><rect x="17.84" y="19.28" width="1.49" height="1.49" fill="#111"/><rect x="17.84" y="25.04" width="1.49" height="1.49" fill="#111"/><rect x="17.84" y="26.48" width="1.49" height="1.49" fill="#111"/><rect x="17.84" y="27.92" width="1.49" height="1.49" fill="#111"/><rect x="17.84" y="29.36" width="1.49" height="1.49" fill="#111"/><rect x="17.84" y="30.80" width="1.49" height="1.49" fill="#111"/><rect x="17.84" y="32.24" width="1.49" height="1.49" fill="#111"/><rect x="19.28" y="2.00" width="1.49" height="1.49" fill="#111"/><rect x="19.28" y="6.32" width="1.49" height="1.49" fill="#111"/><rect x="19.28" y="10.64" width="1.49" height="1.49" fill="#111"/><rect x="19.28" y="13.52" width="1.49" height="1.49" fill="#111"/><rect x="19.28" y="14.96" width="1.49" height="1.49" fill="#111"/><rect x="19.28" y="19.28" width="1.49" height="1.49" fill="#111"/><rect x="19.28" y="20.72" width="1.49" height="1.49" fill="#111"/><rect x="19.28" y="22.16" width="1.49" height="1.49" fill="#111"/><rect x="19.28" y="23.60" width="1.49" height="1.49" fill="#111"/><rect x="19.28" y="25.04" width="1.49" height="1.49" fill="#111"/><rect x="19.28" y="26.48" width="1.49" height="1.49" fill="#111"/><rect x="19.28" y="29.36" width="1.49" height="1.49" fill="#111"/><rect x="19.28" y="32.24" width="1.49" height="1.49" fill="#111"/><rect x="19.28" y="33.68" width="1.49" height="1.49" fill="#111"/><rect x="19.28" y="35.12" width="1.49" height="1.49" fill="#111"/><rect x="20.72" y="2.00" width="1.49" height="1.49" fill="#111"/><rect x="20.72" y="3.44" width="1.49" height="1.49" fill="#111"/><rect x="20.72" y="9.20" width="1.49" height="1.49" fill="#111"/><rect x="20.72" y="10.64" width="1.49" height="1.49" fill="#111"/><rect x="20.72" y="12.08" width="1.49" height="1.49" fill="#111"/><rect x="20.72" y="14.96" width="1.49" height="1.49" fill="#111"/><rect x="20.72" y="16.40" width="1.49" height="1.49" fill="#111"/><rect x="20.72" y="17.84" width="1.49" height="1.49" fill="#111"/><rect x="20.72" y="22.16" width="1.49" height="1.49" fill="#111"/><rect x="20.72" y="23.60" width="1.49" height="1.49" fill="#111"/><rect x="20.72" y="29.36" width="1.49" height="1.49" fill="#111"/><rect x="20.72" y="30.80" width="1.49" height="1.49" fill="#111"/><rect x="20.72" y="33.68" width="1.49" height="1.49" fill="#111"/><rect x="20.72" y="35.12" width="1.49" height="1.49" fill="#111"/><rect x="22.16" y="4.88" width="1.49" height="1.49" fill="#111"/><rect x="22.16" y="7.76" width="1.49" height="1.49" fill="#111"/><rect x="22.16" y="10.64" width="1.49" height="1.49" fill="#111"/><rect x="22.16" y="12.08" width="1.49" height="1.49" fill="#111"/><rect x="22.16" y="16.40" width="1.49" height="1.49" fill="#111"/><rect x="22.16" y="17.84" width="1.49" height="1.49" fill="#111"/><rect x="22.16" y="20.72" width="1.49" height="1.49" fill="#111"/><rect x="22.16" y="22.16" width="1.49" height="1.49" fill="#111"/><rect x="22.16" y="23.60" width="1.49" height="1.49" fill="#111"/><rect x="22.16" y="25.04" width="1.49" height="1.49" fill="#111"/><rect x="22.16" y="26.48" width="1.49" height="1.49" fill="#111"/><rect x="22.16" y="27.92" width="1.49" height="1.49" fill="#111"/><rect x="22.16" y="29.36" width="1.49" height="1.49" fill="#111"/><rect x="22.16" y="32.24" width="1.49" height="1.49" fill="#111"/><rect x="22.16" y="33.68" width="1.49" height="1.49" fill="#111"/><rect x="22.16" y="35.12" width="1.49" height="1.49" fill="#111"/><rect x="22.16" y="36.56" width="1.49" height="1.49" fill="#111"/><rect x="23.60" y="2.00" width="1.49" height="1.49" fill="#111"/><rect x="23.60" y="3.44" width="1.49" height="1.49" fill="#111"/><rect x="23.60" y="4.88" width="1.49" height="1.49" fill="#111"/><rect x="23.60" y="9.20" width="1.49" height="1.49" fill="#111"/><rect x="23.60" y="10.64" width="1.49" height="1.49" fill="#111"/><rect x="23.60" y="13.52" width="1.49" height="1.49" fill="#111"/><rect x="23.60" y="16.40" width="1.49" height="1.49" fill="#111"/><rect x="23.60" y="17.84" width="1.49" height="1.49" fill="#111"/><rect x="23.60" y="20.72" width="1.49" height="1.49" fill="#111"/><rect x="23.60" y="22.16" width="1.49" height="1.49" fill="#111"/><rect x="23.60" y="26.48" width="1.49" height="1.49" fill="#111"/><rect x="23.60" y="32.24" width="1.49" height="1.49" fill="#111"/><rect x="23.60" y="33.68" width="1.49" height="1.49" fill="#111"/><rect x="23.60" y="35.12" width="1.49" height="1.49" fill="#111"/><rect x="23.60" y="36.56" width="1.49" height="1.49" fill="#111"/><rect x="25.04" y="2.00" width="1.49" height="1.49" fill="#111"/><rect x="25.04" y="4.88" width="1.49" height="1.49" fill="#111"/><rect x="25.04" y="6.32" width="1.49" height="1.49" fill="#111"/><rect x="25.04" y="7.76" width="1.49" height="1.49" fill="#111"/><rect x="25.04" y="13.52" width="1.49" height="1.49" fill="#111"/><rect x="25.04" y="14.96" width="1.49" height="1.49" fill="#111"/><rect x="25.04" y="16.40" width="1.49" height="1.49" fill="#111"/><rect x="25.04" y="17.84" width="1.49" height="1.49" fill="#111"/><rect x="25.04" y="19.28" width="1.49" height="1.49" fill="#111"/><rect x="25.04" y="20.72" width="1.49" height="1.49" fill="#111"/><rect x="25.04" y="22.16" width="1.49" height="1.49" fill="#111"/><rect x="25.04" y="27.92" width="1.49" height="1.49" fill="#111"/><rect x="25.04" y="30.80" width="1.49" height="1.49" fill="#111"/><rect x="25.04" y="32.24" width="1.49" height="1.49" fill="#111"/><rect x="25.04" y="33.68" width="1.49" height="1.49" fill="#111"/><rect x="25.04" y="35.12" width="1.49" height="1.49" fill="#111"/><rect x="25.04" y="36.56" width="1.49" height="1.49" fill="#111"/><rect x="26.48" y="2.00" width="1.49" height="1.49" fill="#111"/><rect x="26.48" y="3.44" width="1.49" height="1.49" fill="#111"/><rect x="26.48" y="4.88" width="1.49" height="1.49" fill="#111"/><rect x="26.48" y="6.32" width="1.49" height="1.49" fill="#111"/><rect x="26.48" y="7.76" width="1.49" height="1.49" fill="#111"/><rect x="26.48" y="9.20" width="1.49" height="1.49" fill="#111"/><rect x="26.48" y="10.64" width="1.49" height="1.49" fill="#111"/><rect x="26.48" y="12.08" width="1.49" height="1.49" fill="#111"/><rect x="26.48" y="13.52" width="1.49" height="1.49" fill="#111"/><rect x="26.48" y="14.96" width="1.49" height="1.49" fill="#111"/><rect x="26.48" y="16.40" width="1.49" height="1.49" fill="#111"/><rect x="26.48" y="26.48" width="1.49" height="1.49" fill="#111"/><rect x="26.48" y="27.92" width="1.49" height="1.49" fill="#111"/><rect x="26.48" y="30.80" width="1.49" height="1.49" fill="#111"/><rect x="26.48" y="35.12" width="1.49" height="1.49" fill="#111"/><rect x="27.92" y="7.76" width="1.49" height="1.49" fill="#111"/><rect x="27.92" y="10.64" width="1.49" height="1.49" fill="#111"/><rect x="27.92" y="22.16" width="1.49" height="1.49" fill="#111"/><rect x="27.92" y="23.60" width="1.49" height="1.49" fill="#111"/><rect x="27.92" y="25.04" width="1.49" height="1.49" fill="#111"/><rect x="27.92" y="26.48" width="1.49" height="1.49" fill="#111"/><rect x="27.92" y="27.92" width="1.49" height="1.49" fill="#111"/><rect x="27.92" y="36.56" width="1.49" height="1.49" fill="#111"/><rect x="29.36" y="2.00" width="1.49" height="1.49" fill="#111"/><rect x="29.36" y="6.32" width="1.49" height="1.49" fill="#111"/><rect x="29.36" y="10.64" width="1.49" height="1.49" fill="#111"/><rect x="29.36" y="13.52" width="1.49" height="1.49" fill="#111"/><rect x="29.36" y="14.96" width="1.49" height="1.49" fill="#111"/><rect x="29.36" y="16.40" width="1.49" height="1.49" fill="#111"/><rect x="29.36" y="19.28" width="1.49" height="1.49" fill="#111"/><rect x="29.36" y="23.60" width="1.49" height="1.49" fill="#111"/><rect x="29.36" y="25.04" width="1.49" height="1.49" fill="#111"/><rect x="29.36" y="26.48" width="1.49" height="1.49" fill="#111"/><rect x="29.36" y="33.68" width="1.49" height="1.49" fill="#111"/><rect x="29.36" y="35.12" width="1.49" height="1.49" fill="#111"/><rect x="29.36" y="36.56" width="1.49" height="1.49" fill="#111"/><rect x="30.80" y="3.44" width="1.49" height="1.49" fill="#111"/><rect x="30.80" y="6.32" width="1.49" height="1.49" fill="#111"/><rect x="30.80" y="7.76" width="1.49" height="1.49" fill="#111"/><rect x="30.80" y="9.20" width="1.49" height="1.49" fill="#111"/><rect x="30.80" y="14.96" width="1.49" height="1.49" fill="#111"/><rect x="30.80" y="16.40" width="1.49" height="1.49" fill="#111"/><rect x="30.80" y="17.84" width="1.49" height="1.49" fill="#111"/><rect x="30.80" y="19.28" width="1.49" height="1.49" fill="#111"/><rect x="30.80" y="20.72" width="1.49" height="1.49" fill="#111"/><rect x="30.80" y="23.60" width="1.49" height="1.49" fill="#111"/><rect x="30.80" y="27.92" width="1.49" height="1.49" fill="#111"/><rect x="30.80" y="29.36" width="1.49" height="1.49" fill="#111"/><rect x="30.80" y="33.68" width="1.49" height="1.49" fill="#111"/><rect x="30.80" y="35.12" width="1.49" height="1.49" fill="#111"/><rect x="30.80" y="36.56" width="1.49" height="1.49" fill="#111"/><rect x="32.24" y="3.44" width="1.49" height="1.49" fill="#111"/><rect x="32.24" y="6.32" width="1.49" height="1.49" fill="#111"/><rect x="32.24" y="10.64" width="1.49" height="1.49" fill="#111"/><rect x="32.24" y="13.52" width="1.49" height="1.49" fill="#111"/><rect x="32.24" y="17.84" width="1.49" height="1.49" fill="#111"/><rect x="32.24" y="20.72" width="1.49" height="1.49" fill="#111"/><rect x="32.24" y="22.16" width="1.49" height="1.49" fill="#111"/><rect x="32.24" y="23.60" width="1.49" height="1.49" fill="#111"/><rect x="32.24" y="25.04" width="1.49" height="1.49" fill="#111"/><rect x="32.24" y="26.48" width="1.49" height="1.49" fill="#111"/><rect x="32.24" y="27.92" width="1.49" height="1.49" fill="#111"/><rect x="32.24" y="29.36" width="1.49" height="1.49" fill="#111"/><rect x="32.24" y="30.80" width="1.49" height="1.49" fill="#111"/><rect x="32.24" y="32.24" width="1.49" height="1.49" fill="#111"/><rect x="32.24" y="35.12" width="1.49" height="1.49" fill="#111"/><rect x="33.68" y="3.44" width="1.49" height="1.49" fill="#111"/><rect x="33.68" y="9.20" width="1.49" height="1.49" fill="#111"/><rect x="33.68" y="10.64" width="1.49" height="1.49" fill="#111"/><rect x="33.68" y="12.08" width="1.49" height="1.49" fill="#111"/><rect x="33.68" y="16.40" width="1.49" height="1.49" fill="#111"/><rect x="33.68" y="17.84" width="1.49" height="1.49" fill="#111"/><rect x="33.68" y="19.28" width="1.49" height="1.49" fill="#111"/><rect x="33.68" y="20.72" width="1.49" height="1.49" fill="#111"/><rect x="33.68" y="22.16" width="1.49" height="1.49" fill="#111"/><rect x="33.68" y="25.04" width="1.49" height="1.49" fill="#111"/><rect x="33.68" y="27.92" width="1.49" height="1.49" fill="#111"/><rect x="33.68" y="29.36" width="1.49" height="1.49" fill="#111"/><rect x="33.68" y="30.80" width="1.49" height="1.49" fill="#111"/><rect x="33.68" y="32.24" width="1.49" height="1.49" fill="#111"/><rect x="33.68" y="33.68" width="1.49" height="1.49" fill="#111"/><rect x="35.12" y="10.64" width="1.49" height="1.49" fill="#111"/><rect x="35.12" y="13.52" width="1.49" height="1.49" fill="#111"/><rect x="35.12" y="17.84" width="1.49" height="1.49" fill="#111"/><rect x="35.12" y="19.28" width="1.49" height="1.49" fill="#111"/><rect x="35.12" y="22.16" width="1.49" height="1.49" fill="#111"/><rect x="35.12" y="23.60" width="1.49" height="1.49" fill="#111"/><rect x="35.12" y="25.04" width="1.49" height="1.49" fill="#111"/><rect x="35.12" y="26.48" width="1.49" height="1.49" fill="#111"/><rect x="35.12" y="30.80" width="1.49" height="1.49" fill="#111"/><rect x="35.12" y="33.68" width="1.49" height="1.49" fill="#111"/><rect x="35.12" y="36.56" width="1.49" height="1.49" fill="#111"/><rect x="36.56" y="2.00" width="1.49" height="1.49" fill="#111"/><rect x="36.56" y="3.44" width="1.49" height="1.49" fill="#111"/><rect x="36.56" y="4.88" width="1.49" height="1.49" fill="#111"/><rect x="36.56" y="7.76" width="1.49" height="1.49" fill="#111"/><rect x="36.56" y="9.20" width="1.49" height="1.49" fill="#111"/><rect x="36.56" y="13.52" width="1.49" height="1.49" fill="#111"/><rect x="36.56" y="14.96" width="1.49" height="1.49" fill="#111"/><rect x="36.56" y="16.40" width="1.49" height="1.49" fill="#111"/><rect x="36.56" y="17.84" width="1.49" height="1.49" fill="#111"/><rect x="36.56" y="19.28" width="1.49" height="1.49" fill="#111"/><rect x="36.56" y="20.72" width="1.49" height="1.49" fill="#111"/><rect x="36.56" y="22.16" width="1.49" height="1.49" fill="#111"/><rect x="36.56" y="23.60" width="1.49" height="1.49" fill="#111"/><rect x="36.56" y="29.36" width="1.49" height="1.49" fill="#111"/><rect x="36.56" y="30.80" width="1.49" height="1.49" fill="#111"/><rect x="36.56" y="33.68" width="1.49" height="1.49" fill="#111"/><rect x="36.56" y="35.12" width="1.49" height="1.49" fill="#111"/><rect x="36.56" y="36.56" width="1.49" height="1.49" fill="#111"/><rect x="0.56" y="0.56" width="12.96" height="12.96" fill="#fff"/><rect x="2.72" y="2.72" width="8.64" height="8.64" fill="none" stroke="#111" stroke-width="1.44"/><rect x="4.88" y="4.88" width="4.32" height="4.32" fill="#111"/><rect x="26.48" y="0.56" width="12.96" height="12.96" fill="#fff"/><rect x="28.64" y="2.72" width="8.64" height="8.64" fill="none" stroke="#111" stroke-width="1.44"/><rect x="30.80" y="4.88" width="4.32" height="4.32" fill="#111"/><rect x="0.56" y="26.48" width="12.96" height="12.96" fill="#fff"/><rect x="2.72" y="28.64" width="8.64" height="8.64" fill="none" stroke="#111" stroke-width="1.44"/><rect x="4.88" y="30.80" width="4.32" height="4.32" fill="#111"/><rect x="0" y="0" width="40" height="2" fill="#fff"/><rect x="0" y="0" width="2" height="40" fill="#fff"/></svg>
<div class="cell " style="left:353px;width:112px;top:325px;line-height:16px;text-align:center;white-space:nowrap;">教育 > 幼儿园</div>
<div class="cell " style="left:464px;width:90px;top:325px;line-height:16px;text-align:center;white-space:nowrap;">测试5.11</div>
<div class="cell " style="left:553px;width:156px;top:325px;line-height:16px;text-align:center;white-space:nowrap;">测试5.11</div>
<div class="cell " style="left:708px;width:90px;top:325px;line-height:16px;text-align:center;white-space:nowrap;">189487451254</div>
<div class="cell grn" style="left:797px;width:79px;top:305px;line-height:16px;text-align:left;white-space:nowrap;padding-left:30px">已审</div>
<div class="cell red" style="left:797px;width:79px;top:345px;line-height:16px;text-align:left;white-space:nowrap;padding-left:30px">A级</div>
<div class="cell " style="left:875px;width:79px;top:325px;line-height:16px;text-align:center;white-space:nowrap;">2020-09-01</div>
<div class="cell" style="left:960px;top:305px;line-height:16px;white-space:nowrap;text-align:left"><a class="lk">广告管理</a> &nbsp;<a class="lk">产品管理</a> &nbsp;<a class="lk">动态管理</a> &nbsp;<a class="lk">360全景</a></div>
<div class="cell" style="left:960px;top:345px;line-height:16px;white-space:nowrap;text-align:left"><a class="lk">风采管理</a> &nbsp;<a class="lk">促销管理</a> &nbsp;<a class="lk">收款管理</a> &nbsp;<a class="lk">720全景</a></div>
<svg class="abs" style="left:1180px;top:324px" width="20" height="20" viewBox="0 0 20 20"><circle cx="10" cy="10" r="10" fill="#1cb3f3"/><g fill="none" stroke="#fff" stroke-width="1.2"><rect x="4.6" y="4.6" width="4.6" height="4.4"/><rect x="10.9" y="4.6" width="4.6" height="4.4"/><rect x="4.6" y="11" width="4.6" height="4.4"/></g><g fill="#fff"><rect x="6.3" y="6.2" width="1.2" height="1.2"/><rect x="12.6" y="6.2" width="1.2" height="1.2"/><rect x="6.3" y="12.6" width="1.2" height="1.2"/><rect x="10.8" y="10.8" width="1.6" height="1.6"/><rect x="13.2" y="11.5" width="1.4" height="1.4"/><rect x="11" y="13.5" width="1.4" height="2"/><rect x="13" y="14" width="2.6" height="1.5"/></g></svg>
<svg class="abs" style="left:1208px;top:324px" width="20" height="20" viewBox="0 0 20 20"><circle cx="10" cy="10" r="10" fill="#21a97e"/><path d="M4.6 3.8 V14.6 H16.3" stroke="#e6f5ee" stroke-width="0.9" fill="none"/><path d="M5.8 13.6 Q7.5 8 8.8 8.5 Q10 9 11.5 13.8 L14.6 6" stroke="#e6f5ee" stroke-width="0.8" fill="none"/><circle cx="15.3" cy="4.6" r="1" stroke="#e6f5ee" stroke-width="0.7" fill="none"/></svg>
<div class="cell red" style="left:1230px;width:79px;top:325px;line-height:16px;text-align:center;white-space:nowrap;">未开</div>
<div class="cell " style="left:1308px;width:46px;top:325px;line-height:16px;text-align:center;white-space:nowrap;">编辑</div>
<div class="cell " style="left:1353px;width:47px;top:325px;line-height:16px;text-align:center;white-space:nowrap;">删除</div>
<div class="cell " style="left:230px;width:68px;top:386px;line-height:16px;text-align:right;white-space:nowrap;padding-right:4px">1259</div>
<div class="cell " style="left:230px;width:68px;top:426px;line-height:16px;text-align:left;white-space:nowrap;padding-left:31px">0</div>
<div class="abs" style="left:237px;top:386px;width:19px;height:19px;border:1px solid #999;border-radius:3px;background:linear-gradient(#f2f2f2,#d9d9d9)"></div>
<svg class="abs" style="left:306px;top:398px" width="40" height="31" viewBox="0 0 40 31"><rect width="40" height="31" fill="#edf2fa"/><rect x="8.5" y="2" width="26" height="26.5" rx="3.5" fill="#fff" stroke="#f47920" stroke-width="2.2"/><path d="M15 9.5 Q24 5.5 33 9" stroke="#6dbb3c" stroke-width="1.6" fill="none"/><path d="M11.5 16 L15.5 9.5 L16.5 16 M14 13.5 L20 13" stroke="#3d3a9a" stroke-width="1.6" fill="none"/><text x="18" y="15.5" font-size="6" fill="#f47920" font-family="Liberation Sans" font-style="italic">RINT</text><text x="11.5" y="23" font-size="7" fill="#6a6a6a" font-family="Liberation Sans" letter-spacing="-0.5">快印客</text></svg>
<div class="cell " style="left:353px;width:112px;top:406px;line-height:16px;text-align:center;white-space:nowrap;">美食</div>
<div class="cell " style="left:464px;width:90px;top:406px;line-height:16px;text-align:center;white-space:nowrap;">xiebing</div>
<div class="cell " style="left:553px;width:156px;top:406px;line-height:16px;text-align:center;white-space:nowrap;">快印客客服谢小姐</div>
<div class="cell " style="left:708px;width:90px;top:406px;line-height:16px;text-align:center;white-space:nowrap;">18948189058</div>
<div class="cell grn" style="left:797px;width:79px;top:406px;line-height:16px;text-align:left;white-space:nowrap;padding-left:31px">已审</div>
<div class="cell " style="left:875px;width:79px;top:406px;line-height:16px;text-align:center;white-space:nowrap;">2018-11-27</div>
<div class="cell" style="left:960px;top:386px;line-height:16px;white-space:nowrap;text-align:left"><a class="lk">广告管理</a> &nbsp;<a class="lk">产品管理</a> &nbsp;<a class="lk">动态管理</a> &nbsp;<a class="lk">360全景</a></div>
<div class="cell" style="left:960px;top:426px;line-height:16px;white-space:nowrap;text-align:left"><a class="lk">风采管理</a> &nbsp;<a class="lk">促销管理</a> &nbsp;<a class="lk">收款管理</a> &nbsp;<a class="lk">720全景</a></div>
<svg class="abs" style="left:1180px;top:405px" width="20" height="20" viewBox="0 0 20 20"><circle cx="10" cy="10" r="10" fill="#1cb3f3"/><g fill="none" stroke="#fff" stroke-width="1.2"><rect x="4.6" y="4.6" width="4.6" height="4.4"/><rect x="10.9" y="4.6" width="4.6" height="4.4"/><rect x="4.6" y="11" width="4.6" height="4.4"/></g><g fill="#fff"><rect x="6.3" y="6.2" width="1.2" height="1.2"/><rect x="12.6" y="6.2" width="1.2" height="1.2"/><rect x="6.3" y="12.6" width="1.2" height="1.2"/><rect x="10.8" y="10.8" width="1.6" height="1.6"/><rect x="13.2" y="11.5" width="1.4" height="1.4"/><rect x="11" y="13.5" width="1.4" height="2"/><rect x="13" y="14" width="2.6" height="1.5"/></g></svg>
<svg class="abs" style="left:1208px;top:405px" width="20" height="20" viewBox="0 0 20 20"><circle cx="10" cy="10" r="10" fill="#21a97e"/><path d="M4.6 3.8 V14.6 H16.3" stroke="#e6f5ee" stroke-width="0.9" fill="none"/><path d="M5.8 13.6 Q7.5 8 8.8 8.5 Q10 9 11.5 13.8 L14.6 6" stroke="#e6f5ee" stroke-width="0.8" fill="none"/><circle cx="15.3" cy="4.6" r="1" stroke="#e6f5ee" stroke-width="0.7" fill="none"/></svg>
<div class="cell red" style="left:1230px;width:79px;top:406px;line-height:16px;text-align:center;white-space:nowrap;">未开</div>
<div class="cell " style="left:1308px;width:46px;top:406px;line-height:16px;text-align:center;white-space:nowrap;">编辑</div>
<div class="cell " style="left:1353px;width:47px;top:406px;line-height:16px;text-align:center;white-space:nowrap;">删除</div>
<div class="cell " style="left:230px;width:68px;top:487px;line-height:16px;text-align:right;white-space:nowrap;padding-right:4px">9869</div>
<div class="abs" style="left:237px;top:487px;width:19px;height:19px;border:1px solid #999;border-radius:3px;background:linear-gradient(#f2f2f2,#d9d9d9)"></div>
<svg class="abs" style="left:306px;top:475px" width="40" height="40" viewBox="0 0 40 40"><rect width="40" height="40" fill="#edf1f9"/><path d="M6 4.3 H39" stroke="#e0a0a0" stroke-width="2.4" stroke-dasharray="1.6 0.9"/><path d="M5 20 L8 10 M4.5 13.5 H9.5" stroke="#f2e400" stroke-width="2.6" fill="none"/><path d="M10 11 H17.5 L14.5 14 M13.8 13.5 L12.6 21 M9.5 16 H18" stroke="#74c043" stroke-width="2.2" fill="none"/><path d="M21 10.5 L20 20 M20.6 11 H25 M20.3 15.5 H24.5" stroke="#3bb5a0" stroke-width="2" fill="none"/><path d="M26.2 10 L22.6 29" stroke="#1aa6e0" stroke-width="2.8" fill="none"/><path d="M30 11 L29.2 21 M30 11 H38.5 L37.8 20 M32 20.5 H39.5" stroke="#e4007f" stroke-width="2.3" fill="none"/><path d="M0.5 20.6 L12 20.1" stroke="#3cb854" stroke-width="2"/><path d="M12 20.1 L26 19.4" stroke="#e8403a" stroke-width="2"/><rect x="30" y="24.5" width="4" height="4" fill="#555"/><rect x="35.5" y="24.5" width="3.8" height="4" fill="#777"/></svg>
<div class="cell " style="left:353px;width:112px;top:487px;line-height:16px;text-align:center;white-space:nowrap;">美食 > 火锅</div>
<div class="cell " style="left:464px;width:90px;top:487px;line-height:16px;text-align:center;white-space:nowrap;">wuhognyu1</div>
<div class="cell " style="left:553px;width:156px;top:487px;line-height:16px;text-align:center;white-space:nowrap;">吴红雨</div>
<div class="cell " style="left:708px;width:90px;top:487px;line-height:16px;text-align:center;white-space:nowrap;">18948186591</div>
<div class="cell grn" style="left:797px;width:79px;top:467px;line-height:16px;text-align:left;white-space:nowrap;padding-left:30px">已审</div>
<div class="cell red" style="left:797px;width:79px;top:507px;line-height:16px;text-align:left;white-space:nowrap;padding-left:30px">A级</div>
<div class="cell " style="left:875px;width:79px;top:487px;line-height:16px;text-align:center;white-space:nowrap;">2016-08-19</div>
<div class="cell" style="left:960px;top:467px;line-height:16px;white-space:nowrap;text-align:left"><a class="lk">广告管理</a> &nbsp;<a class="lk">产品管理</a> &nbsp;<a class="lk">动态管理</a> &nbsp;<a class="lk">360全景</a></div>
<div class="cell" style="left:960px;top:507px;line-height:16px;white-space:nowrap;text-align:left"><a class="lk">风采管理</a> &nbsp;<a class="lk">促销管理</a> &nbsp;<a class="lk">收款管理</a> &nbsp;<a class="lk">720全景</a></div>
<svg class="abs" style="left:1180px;top:486px" width="20" height="20" viewBox="0 0 20 20"><circle cx="10" cy="10" r="10" fill="#1cb3f3"/><g fill="none" stroke="#fff" stroke-width="1.2"><rect x="4.6" y="4.6" width="4.6" height="4.4"/><rect x="10.9" y="4.6" width="4.6" height="4.4"/><rect x="4.6" y="11" width="4.6" height="4.4"/></g><g fill="#fff"><rect x="6.3" y="6.2" width="1.2" height="1.2"/><rect x="12.6" y="6.2" width="1.2" height="1.2"/><rect x="6.3" y="12.6" width="1.2" height="1.2"/><rect x="10.8" y="10.8" width="1.6" height="1.6"/><rect x="13.2" y="11.5" width="1.4" height="1.4"/><rect x="11" y="13.5" width="1.4" height="2"/><rect x="13" y="14" width="2.6" height="1.5"/></g></svg>
<svg class="abs" style="left:1208px;top:486px" width="20" height="20" viewBox="0 0 20 20"><circle cx="10" cy="10" r="10" fill="#21a97e"/><path d="M4.6 3.8 V14.6 H16.3" stroke="#e6f5ee" stroke-width="0.9" fill="none"/><path d="M5.8 13.6 Q7.5 8 8.8 8.5 Q10 9 11.5 13.8 L14.6 6" stroke="#e6f5ee" stroke-width="0.8" fill="none"/><circle cx="15.3" cy="4.6" r="1" stroke="#e6f5ee" stroke-width="0.7" fill="none"/></svg>
<div class="cell red" style="left:1230px;width:79px;top:487px;line-height:16px;text-align:center;white-space:nowrap;">未开</div>
<div class="cell " style="left:1308px;width:46px;top:487px;line-height:16px;text-align:center;white-space:nowrap;">编辑</div>
<div class="cell " style="left:1353px;width:47px;top:487px;line-height:16px;text-align:center;white-space:nowrap;">删除</div>
<div class="cell " style="left:230px;width:68px;top:568px;line-height:16px;text-align:right;white-space:nowrap;padding-right:4px">9604</div>
<div class="abs" style="left:237px;top:568px;width:19px;height:19px;border:1px solid #999;border-radius:3px;background:linear-gradient(#f2f2f2,#d9d9d9)"></div>
<svg class="abs" style="left:306px;top:556px" width="40" height="39" viewBox="0 0 40 39"><rect width="40" height="39" fill="#fff"/><path d="M0.5 3 V0.5 H3 M37 0.5 H39.5 V3" stroke="#f47920" stroke-width="1" fill="none"/><path d="M0 38.3 H40" stroke="#f47920" stroke-width="1.4"/><path d="M11 11 Q24 3 36 9" stroke="#6dbb3c" stroke-width="2.4" fill="none"/><path d="M4 19.5 L11 9 L12.5 19.5 M9 15.5 L16 14.5" stroke="#3d3a9a" stroke-width="2.2" fill="none"/><text x="15" y="19" font-size="9" fill="#f47920" font-family="Liberation Sans" font-style="italic">RINT</text><text x="5" y="32" font-size="11" fill="#444" font-family="Liberation Sans" font-style="italic" letter-spacing="-0.8">快印客</text></svg>
<div class="cell " style="left:353px;width:112px;top:568px;line-height:16px;text-align:center;white-space:nowrap;">休闲娱乐 > 真人CS</div>
<div class="cell " style="left:464px;width:90px;top:568px;line-height:16px;text-align:center;white-space:nowrap;">kfzx</div>
<div class="cell " style="left:553px;width:156px;top:568px;line-height:16px;text-align:center;white-space:nowrap;">快印客客服中心</div>
<div class="cell " style="left:708px;width:90px;top:568px;line-height:16px;text-align:center;white-space:nowrap;">18926052096</div>
<div class="cell grn" style="left:797px;width:79px;top:548px;line-height:16px;text-align:left;white-space:nowrap;padding-left:30px">已审</div>
<div class="cell red" style="left:797px;width:79px;top:588px;line-height:16px;text-align:left;white-space:nowrap;padding-left:30px">A级</div>
<div class="cell " style="left:875px;width:79px;top:568px;line-height:16px;text-align:center;white-space:nowrap;">2018-11-27</div>
<div class="cell" style="left:960px;top:548px;line-height:16px;white-space:nowrap;text-align:left"><a class="lk">广告管理</a> &nbsp;<a class="lk">产品管理</a> &nbsp;<a class="lk">动态管理</a> &nbsp;<a class="lk">360全景</a></div>
<div class="cell" style="left:960px;top:588px;line-height:16px;white-space:nowrap;text-align:left"><a class="lk">风采管理</a> &nbsp;<a class="lk">促销管理</a> &nbsp;<a class="lk">收款管理</a> &nbsp;<a class="lk">720全景</a></div>
<svg class="abs" style="left:1180px;top:567px" width="20" height="20" viewBox="0 0 20 20"><circle cx="10" cy="10" r="10" fill="#1cb3f3"/><g fill="none" stroke="#fff" stroke-width="1.2"><rect x="4.6" y="4.6" width="4.6" height="4.4"/><rect x="10.9" y="4.6" width="4.6" height="4.4"/><rect x="4.6" y="11" width="4.6" height="4.4"/></g><g fill="#fff"><rect x="6.3" y="6.2" width="1.2" height="1.2"/><rect x="12.6" y="6.2" width="1.2" height="1.2"/><rect x="6.3" y="12.6" width="1.2" height="1.2"/><rect x="10.8" y="10.8" width="1.6" height="1.6"/><rect x="13.2" y="11.5" width="1.4" height="1.4"/><rect x="11" y="13.5" width="1.4" height="2"/><rect x="13" y="14" width="2.6" height="1.5"/></g></svg>
<svg class="abs" style="left:1208px;top:567px" width="20" height="20" viewBox="0 0 20 20"><circle cx="10" cy="10" r="10" fill="#21a97e"/><path d="M4.6 3.8 V14.6 H16.3" stroke="#e6f5ee" stroke-width="0.9" fill="none"/><path d="M5.8 13.6 Q7.5 8 8.8 8.5 Q10 9 11.5 13.8 L14.6 6" stroke="#e6f5ee" stroke-width="0.8" fill="none"/><circle cx="15.3" cy="4.6" r="1" stroke="#e6f5ee" stroke-width="0.7" fill="none"/></svg>
<div class="cell red" style="left:1230px;width:79px;top:568px;line-height:16px;text-align:center;white-space:nowrap;">未开</div>
<div class="cell " style="left:1308px;width:46px;top:568px;line-height:16px;text-align:center;white-space:nowrap;">编辑</div>
<div class="cell " style="left:1353px;width:47px;top:568px;line-height:16px;text-align:center;white-space:nowrap;">删除</div>
<div class="cell " style="left:230px;width:68px;top:649px;line-height:16px;text-align:right;white-space:nowrap;padding-right:4px">9475</div>
<div class="abs" style="left:237px;top:649px;width:19px;height:19px;border:1px solid #999;border-radius:3px;background:linear-gradient(#f2f2f2,#d9d9d9)"></div>
<svg class="abs" style="left:306px;top:647px" width="40" height="40" viewBox="0 0 40 40"><rect width="40" height="40" fill="#fcebd9"/><rect x="5" y="5.5" width="10" height="7" fill="#a08a6a"/><rect x="5" y="11" width="10" height="1.5" fill="#8cc060"/><ellipse cx="29.5" cy="9" rx="6.5" ry="3.5" fill="none" stroke="#f0b070" stroke-width="0.8" stroke-dasharray="1 0.6"/><path d="M26 9 H33" stroke="#d070c0" stroke-width="1.2"/></svg>
<div class="cell " style="left:353px;width:112px;top:649px;line-height:16px;text-align:center;white-space:nowrap;">美食 > 粤港菜</div>
<div class="cell " style="left:464px;width:90px;top:649px;line-height:16px;text-align:center;white-space:nowrap;">王仙彩粤港菜</div>
<div class="cell " style="left:553px;width:156px;top:649px;line-height:16px;text-align:center;white-space:nowrap;">王仙彩粤港菜</div>
<div class="cell " style="left:708px;width:90px;top:649px;line-height:16px;text-align:center;white-space:nowrap;">18926052095</div>
<div class="cell red" style="left:797px;width:79px;top:649px;line-height:16px;text-align:left;white-space:nowrap;padding-left:11px">推荐<span class=grn style="position:absolute;left:44px">已审</span></div>
<div class="cell " style="left:875px;width:79px;top:649px;line-height:16px;text-align:center;white-space:nowrap;">2020-08-28</div>
<div class="cell" style="left:960px;top:629px;line-height:16px;white-space:nowrap;text-align:left"><a class="lk">广告管理</a> &nbsp;<a class="lk">产品管理</a> &nbsp;<a class="lk">动态管理</a> &nbsp;<a class="lk">360全景</a></div>
<div class="cell" style="left:960px;top:669px;line-height:16px;white-space:nowrap;text-align:left"><a class="lk">风采管理</a> &nbsp;<a class="lk">促销管理</a> &nbsp;<a class="lk">收款管理</a> &nbsp;<a class="lk">720全景</a></div>
<svg class="abs" style="left:1180px;top:648px" width="20" height="20" viewBox="0 0 20 20"><circle cx="10" cy="10" r="10" fill="#1cb3f3"/><g fill="none" stroke="#fff" stroke-width="1.2"><rect x="4.6" y="4.6" width="4.6" height="4.4"/><rect x="10.9" y="4.6" width="4.6" height="4.4"/><rect x="4.6" y="11" width="4.6" height="4.4"/></g><g fill="#fff"><rect x="6.3" y="6.2" width="1.2" height="1.2"/><rect x="12.6" y="6.2" width="1.2" height="1.2"/><rect x="6.3" y="12.6" width="1.2" height="1.2"/><rect x="10.8" y="10.8" width="1.6" height="1.6"/><rect x="13.2" y="11.5" width="1.4" height="1.4"/><rect x="11" y="13.5" width="1.4" height="2"/><rect x="13" y="14" width="2.6" height="1.5"/></g></svg>
<svg class="abs" style="left:1208px;top:648px" width="20" height="20" viewBox="0 0 20 20"><circle cx="10" cy="10" r="10" fill="#21a97e"/><path d="M4.6 3.8 V14.6 H16.3" stroke="#e6f5ee" stroke-width="0.9" fill="none"/><path d="M5.8 13.6 Q7.5 8 8.8 8.5 Q10 9 11.5 13.8 L14.6 6" stroke="#e6f5ee" stroke-width="0.8" fill="none"/><circle cx="15.3" cy="4.6" r="1" stroke="#e6f5ee" stroke-width="0.7" fill="none"/></svg>
<div class="cell red" style="left:1230px;width:79px;top:649px;line-height:16px;text-align:center;white-space:nowrap;">未开</div>
<div class="cell " style="left:1308px;width:46px;top:649px;line-height:16px;text-align:center;white-space:nowrap;">编辑</div>
<div class="cell " style="left:1353px;width:47px;top:649px;line-height:16px;text-align:center;white-space:nowrap;">删除</div>
<div class="rb" style="left:1301px;top:211px;width:59px;height:79px"></div>
<div class="rb" style="left:1114px;top:121px;width:112px;height:55px"></div>
<div class="rb" style="left:1264px;top:125px;width:124px;height:54px"></div>
<svg class="abs" style="left:0;top:0" width="1428" height="664" viewBox="0 0 1428 664"><path d="M1065.4 54.7 L1109.4 104.7 L1107.7 106.4 L1121.4 115.5 L1113.6 101.0 L1111.8 102.6 L1066.2 54.1 Z" fill="#f33"/><path d="M1388.0 68.2 L1364.1 106.9 L1362.0 105.7 L1357.4 121.5 L1368.9 109.7 L1366.9 108.5 L1388.8 68.8 Z" fill="#f33"/></svg>
<div class="abs" style="left:0;top:0;width:1428px;height:2px;background:#fff"></div>
</body></html>
